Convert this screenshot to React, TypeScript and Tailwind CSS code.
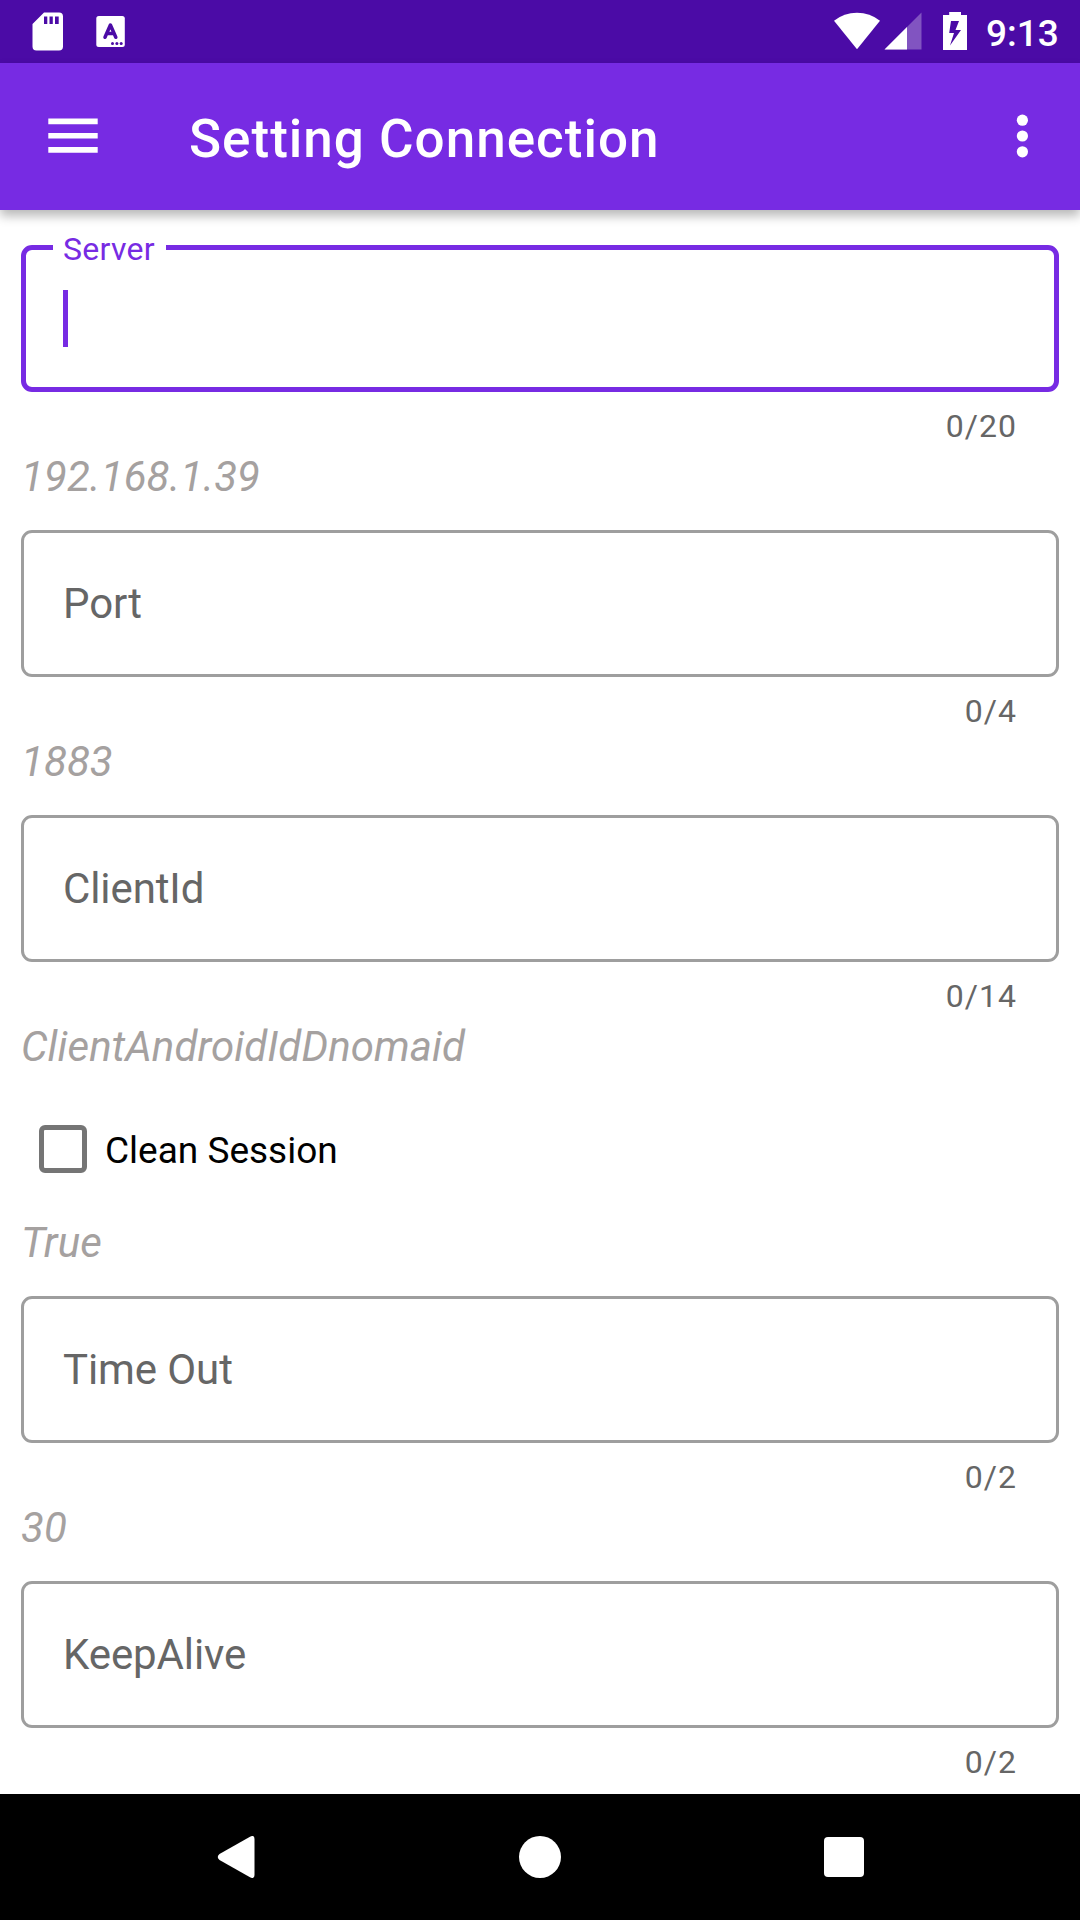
import React from "react";

type FieldProps = { label: string; counter: string; hint?: string; focused?: boolean };

function Field({ label, counter, hint, focused }: FieldProps) {
  return (
    <div className="flex h-[285px] shrink-0 flex-col">
      {focused ? (
        <div className="relative flex h-[147px] shrink-0 items-center rounded-[11px] border-[5px] border-[#772be3] pl-[37px]">
          <span className="absolute -top-[19px] left-[27px] h-[37px] w-[113px] bg-white pl-[10px] text-[32px] leading-[37px] tracking-[0.3px] text-[#772be3]">
            {label}
          </span>
          <span className="h-[57px] w-[5px] bg-[#772be3]" />
        </div>
      ) : (
        <div className="flex h-[147px] shrink-0 items-center rounded-[11px] border-[3px] border-[#9e9e9e] pl-[39px]">
          <span className="text-[42px] leading-[49px] tracking-[-0.1px] text-[#666]">{label}</span>
        </div>
      )}
      <div className="mt-[16px] h-[37px] pr-[42px] text-right text-[32px] leading-[37px] tracking-[1.05px] text-[#666]">
        {counter}
      </div>
      {hint && <Hint text={hint} />}
    </div>
  );
}

function Hint({ text }: { text: string }) {
  return <div className="mt-[4px] h-[56px] shrink-0 text-[42px] italic leading-[56px] tracking-[0.07px] text-[#a5a1a0]">{text}</div>;
}

function StatusBar() {
  return (
    <header className="h-[63px] shrink-0 bg-[#4b0ba6]">
      <div className="flex h-full items-start text-white">
        <svg className="ml-[32px] mt-[12px] h-[39px] w-[31px]" viewBox="0 0 31 39">
          <path fill="currentColor" fillRule="evenodd" d="M12 .5H27Q31 .5 31 4.5V34.500Q31 38.500 27 38.500H4.500Q.5 38.500 .5 34.500V12ZM12 4.500V12H15.300V4.500ZM17.500 4.500V12H20.800V4.500ZM23 4.500V12H26.700V4.500Z" />
        </svg>
        <svg className="ml-[33px] mt-[16px] h-[31px] w-[29px]" viewBox="0 0 29 31">
          <rect x=".3" width="28.500" height="31" rx="2.500" fill="currentColor" />
          <path d="M9 21.300 14.400 9 19.800 21.300M11 17.500H18" fill="none" stroke="#4b0ba6" strokeWidth="3.500" strokeLinecap="round" strokeLinejoin="round" />
          <g fill="#4b0ba6"><circle cx="16.500" cy="27.400" r="1.500" /><circle cx="20.900" cy="27.400" r="1.500" /><circle cx="25.200" cy="27.400" r="1.500" /></g>
        </svg>
        <svg className="ml-auto mt-[12px] h-[38px] w-[46px]" viewBox="0 0 46 38">
          <path fill="currentColor" d="M23 37.200 0 8.800Q10 .8 23 .8T46 8.800Z" />
        </svg>
        <svg className="ml-[4px] mt-[12px] h-[38px] w-[38px]" viewBox="0 0 38 38">
          <path fill="currentColor" fillOpacity=".3" d="M37.500.5V37.500H.5Z" />
          <path fill="currentColor" d="M23 15V37.500H.5Z" />
        </svg>
        <svg className="ml-[21px] mt-[12px] h-[38px] w-[24px]" viewBox="0 0 24 38">
          <path fill="currentColor" fillRule="evenodd" d="M6.200 0H18V3H24V38H0V3H6.200ZM8 9 6.200 21H11L7 33.500 18 18H12.500L16 9Z" />
        </svg>
        <span className="ml-[19px] mr-[21px] mt-[12px] w-[73px] whitespace-nowrap text-[37px] font-medium leading-[43px]">9:13</span>
      </div>
    </header>
  );
}

export default function App() {
  return (
    <div className="flex h-[1920px] w-[1080px] flex-col overflow-hidden bg-white font-[Roboto,sans-serif]">
      <StatusBar />
      <div className="relative z-10 flex h-[147px] shrink-0 items-center bg-[#772be3] text-white shadow-[0_6px_10px_rgba(0,0,0,0.28)]">
        <svg className="mb-[2px] ml-[48px] h-[36px] w-[50px]" viewBox="0 0 50 36">
          <path fill="currentColor" d="M.3.500H49.700V6.300H.3ZM.3 15H49.700V20.500H.3ZM.3 29H49.700V34.800H.3Z" />
        </svg>
        <h1 className="ml-[91px] mt-[5px] text-[53px] font-medium leading-[62px] tracking-[1px]">Setting Connection</h1>
        <svg className="mb-[2px] ml-auto mr-[51px] h-[44px] w-[13px]" viewBox="0 0 13 44">
          <g fill="currentColor"><circle cx="6.400" cy="6.200" r="5.600" /><circle cx="6.400" cy="22" r="5.600" /><circle cx="6.400" cy="37.800" r="5.600" /></g>
        </svg>
      </div>
      <main className="flex min-h-0 flex-1 flex-col overflow-hidden px-[21px] pt-[35px]">
        <Field label="Server" counter="0/20" hint="192.168.1.39" focused />
        <Field label="Port" counter="0/4" hint="1883" />
        <Field label="ClientId" counter="0/14" hint="ClientAndroidIdDnomaid" />
        <div className="flex h-[196px] shrink-0 flex-col">
          <label className="mb-[13px] flex h-[98px] items-center pl-[18px]">
            <span className="h-[48px] w-[48px] rounded-[6px] border-[5.5px] border-[#757575]" />
            <span className="ml-[18px] mt-[2px] text-[37px] leading-[43px] text-black">Clean Session</span>
          </label>
          <Hint text="True" />
        </div>
        <Field label="Time Out" counter="0/2" hint="30" />
        <Field label="KeepAlive" counter="0/2" />
      </main>
      <nav className="grid h-[126px] shrink-0 grid-cols-[472px_136px_472px] items-center bg-black text-white">
        <svg className="ml-[217px] h-[42px] w-[38px]" viewBox="0 0 38 42">
          <path fill="currentColor" d="M33 .7Q37.500-1.500 37.500 3V39Q37.500 43.500 33 41.300L2.500 24Q-1 21 2.500 18Z" />
        </svg>
        <span className="h-[42px] w-[42px] justify-self-center rounded-full bg-white" />
        <span className="ml-[216px] h-[40px] w-[40px] rounded-[4px] bg-white" />
      </nav>
    </div>
  );
}
